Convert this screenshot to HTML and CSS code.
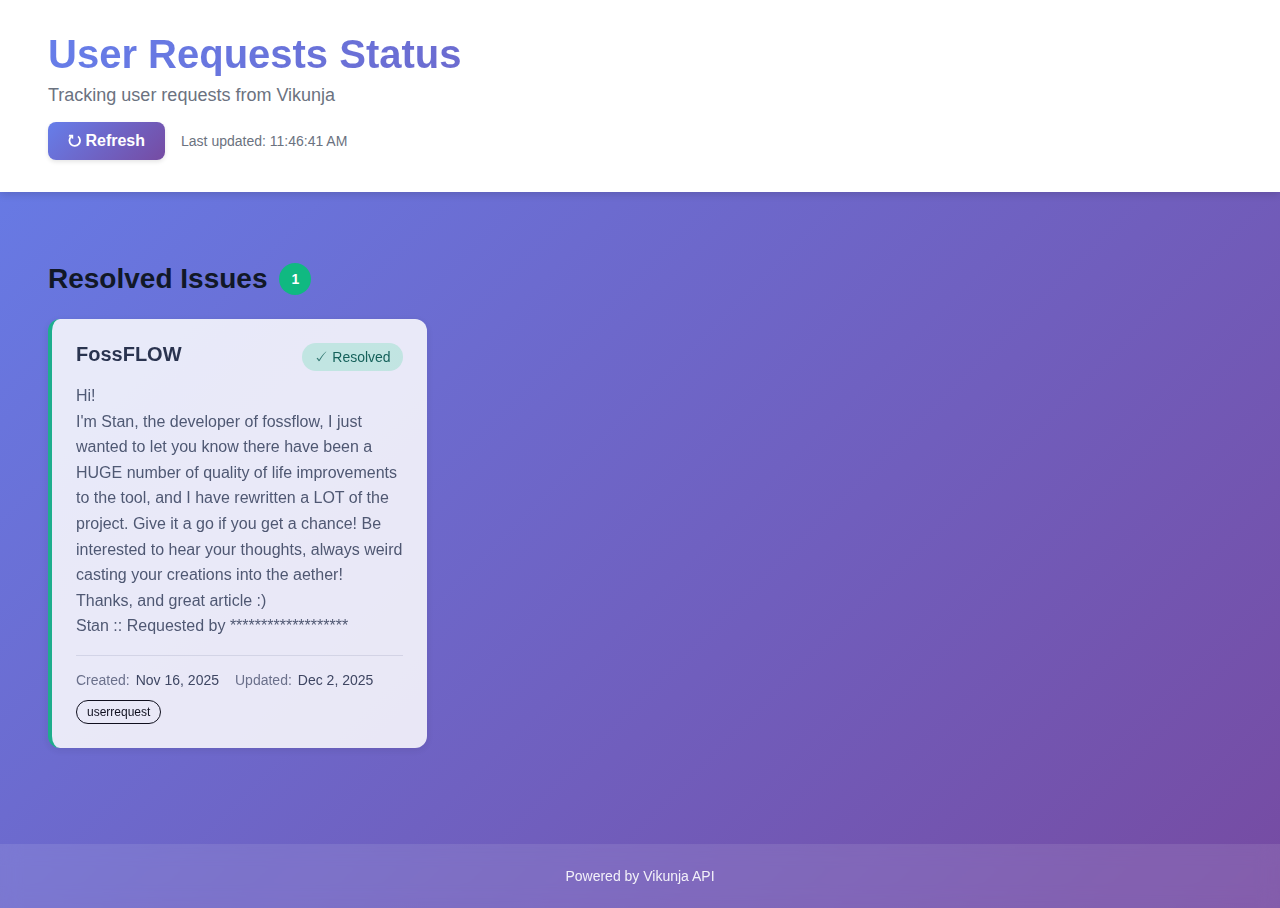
FILE: index.html
```html
<!DOCTYPE html>
<html lang="en">
<head>
    <meta charset="UTF-8">
    <meta name="viewport" content="width=device-width, initial-scale=1.0">
    <title>User Requests Status</title>
    <link rel="stylesheet" href="styles.css">
</head>
<body>
    <header class="header">
        <h1>User Requests Status</h1>
        <p class="subtitle">Tracking user requests from Vikunja</p>
        <div class="header-actions">
            <button type="button" class="refresh-btn">
                <svg class="refresh-icon" viewBox="0 0 13 14" aria-hidden="true">
                    <path d="M10 2.4A5.3 5.3 0 1 1 3.2 2.6" fill="none" stroke="currentColor" stroke-width="1.8"/>
                    <path d="M1.2 0.8H5.2V4.8L3.6 4.4L3.2 2.8L0.6 2.6Z" fill="currentColor"/>
                </svg>
                Refresh
            </button>
            <span class="last-updated">Last updated: 11:46:41 AM</span>
        </div>
    </header>

    <main class="main">
        <section class="section">
            <h2 class="section-title">Resolved Issues <span class="count">1</span></h2>

            <div class="task-grid">
                <article class="task-card">
                    <div class="task-header">
                        <h3>FossFLOW</h3>
                        <span class="status">
                            <svg class="check-icon" viewBox="0 0 14 14" aria-hidden="true">
                                <path d="M2.5 8.3L3.7 7.7L5.1 9.8C7.1 6.4 9.3 3.7 12.1 1.4L12.3 1.7C9.8 4.4 7.6 7.4 5.6 11L4.8 11.2Z" fill="currentColor"/>
                            </svg>
                            Resolved
                        </span>
                    </div>
                    <div class="task-description">
                        Hi!<br>
                        I'm Stan, the developer of fossflow, I just wanted to let you know there have been a HUGE number of quality of life improvements to the tool, and I have rewritten a LOT of the project. Give it a go if you get a chance! Be interested to hear your thoughts, always weird casting your creations into the aether!<br>
                        Thanks, and great article :)<br>
                        Stan :: Requested by *******************
                    </div>
                    <div class="task-meta">
                        <div class="meta-item">
                            <span class="meta-label">Created:</span>
                            <span class="meta-value">Nov 16, 2025</span>
                        </div>
                        <div class="meta-item">
                            <span class="meta-label">Updated:</span>
                            <span class="meta-value">Dec 2, 2025</span>
                        </div>
                    </div>
                    <div class="labels">
                        <span class="label">userrequest</span>
                    </div>
                </article>
            </div>
        </section>
    </main>

    <footer class="footer">
        <p>Powered by Vikunja API</p>
    </footer>
</body>
</html>
```

FILE: styles.css
```css
* {
    box-sizing: border-box;
    margin: 0;
    padding: 0;
}

body {
    display: flex;
    flex-direction: column;
    min-height: 100vh;
    font-family: "Liberation Sans", Arial, sans-serif;
    color: #111827;
    background: linear-gradient(135deg, #667eea 0%, #764ba2 100%);
}

/* Header */
.header {
    padding: 32px 48px;
    background: white;
    box-shadow: 0 2px 8px rgba(0, 0, 0, 0.15);
}

h1 {
    margin-bottom: 8px;
    font-size: 40px;
    line-height: 45px;
    background: linear-gradient(135deg, #667eea 0%, #764ba2 100%);
    -webkit-background-clip: text;
    background-clip: text;
    color: transparent;
}

.subtitle {
    margin-bottom: 16px;
    font-size: 18px;
    line-height: 21px;
    color: #6b7280;
}

.header-actions {
    display: flex;
    align-items: center;
    gap: 16px;
}

.refresh-btn {
    padding: 10px 20px;
    border: none;
    border-radius: 8px;
    font-family: inherit;
    font-size: 16px;
    font-weight: bold;
    line-height: 18px;
    color: white;
    background: linear-gradient(135deg, #667eea 0%, #764ba2 100%);
    box-shadow: 0 2px 4px rgba(0, 0, 0, 0.1);
    cursor: pointer;
}

.refresh-icon {
    width: 13px;
    height: 14px;
    vertical-align: -2px;
}

.last-updated {
    font-size: 14px;
    color: #6b7280;
}

/* Task list */
.main {
    flex: 1;
    padding: 71px 48px 96px;
}

.section-title {
    display: flex;
    align-items: center;
    gap: 12px;
    margin-bottom: 24px;
    font-size: 28px;
    line-height: 32px;
}

.count {
    min-width: 32px;
    height: 32px;
    padding: 0 8px;
    border-radius: 16px;
    font-size: 14px;
    text-align: center;
    color: white;
    background: #10b981;
}

.task-grid {
    display: grid;
    grid-template-columns: repeat(auto-fill, minmax(350px, 1fr));
    gap: 24px;
}

.task-card {
    padding: 24px;
    border-left: 4px solid #10b981;
    border-radius: 12px;
    background: white;
    box-shadow: 0 2px 8px rgba(0, 0, 0, 0.1);
    opacity: 0.85;
}

.task-header {
    display: flex;
    justify-content: space-between;
    align-items: flex-start;
    gap: 16px;
    margin-bottom: 12px;
}

.task-header h3 {
    font-size: 20px;
    color: #1f2937;
}

.status {
    padding: 6px 12px;
    border-radius: 14px;
    font-size: 14px;
    line-height: 16px;
    white-space: nowrap;
    color: #065f46;
    background: #d1fae5;
}

.check-icon {
    width: 14px;
    height: 14px;
    vertical-align: -2px;
    opacity: 0.8;
}

.task-description {
    margin-bottom: 16px;
    line-height: 1.6;
    color: #4b5563;
}

.task-meta {
    display: flex;
    flex-wrap: wrap;
    gap: 16px;
    padding-top: 16px;
    border-top: 1px solid #e5e7eb;
    font-size: 14px;
    line-height: 16px;
}

.meta-item {
    display: flex;
    gap: 6px;
}

.meta-label {
    color: #6b7280;
}

.meta-value {
    color: #374151;
}

.labels {
    display: flex;
    flex-wrap: wrap;
    gap: 8px;
    margin-top: 12px;
}

.label {
    padding: 4px 10px;
    border: 1px solid black;
    border-radius: 12px;
    font-size: 12px;
    line-height: 14px;
    color: black;
}

/* Footer */
.footer {
    padding: 24px;
    font-size: 14px;
    line-height: 16px;
    text-align: center;
    color: rgba(255, 255, 255, 0.9);
    background: rgba(255, 255, 255, 0.1);
    backdrop-filter: blur(10px);
}
```
